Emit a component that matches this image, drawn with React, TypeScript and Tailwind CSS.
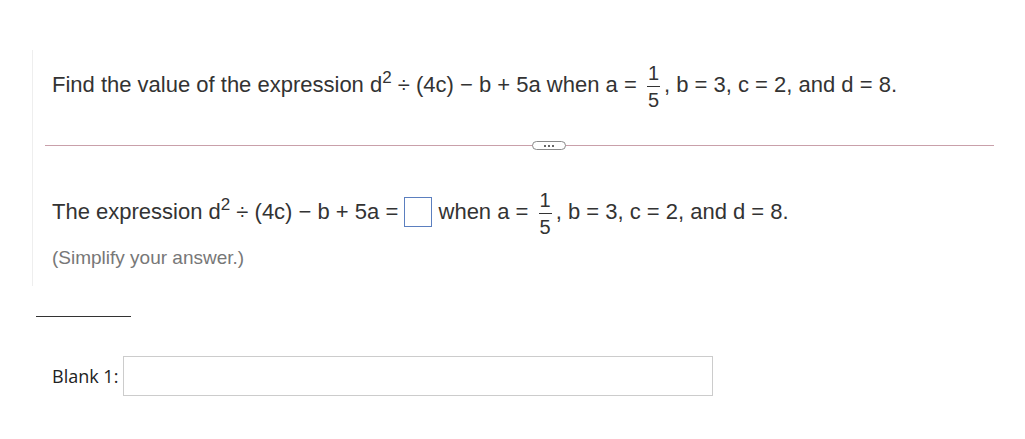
import React from 'react';

const Frac: React.FC<{ num: string; den: string }> = ({ num, den }) => (
    <span className="inline-flex flex-col items-center align-middle mx-[4px] text-[20px] leading-none">
        <span className="px-[1px] pb-[3px] border-b border-[#333]">{num}</span>
        <span className="pt-[3px]">{den}</span>
    </span>
);

const Expr: React.FC = () => (
    <>
        d<span className="text-[17px] align-[9px] leading-none">2</span> ÷ (4c) − b + 5a
    </>
);

const App: React.FC = () => {
    return (
        <div className="w-[1025px] h-[439px] bg-white text-[#333] font-['Liberation_Sans',Arial,sans-serif] overflow-hidden">
            {/* question panel */}
            <div className="ml-[32px] pt-[50px]">
                <div className="border-l border-[#eeeeee] h-[236px]">
                    <p className="pl-[19px] pt-[13px] text-[22px] leading-[40px] whitespace-nowrap">
                        Find the value of the expression <Expr /> when a = <Frac num="1" den="5" />, b = 3, c = 2, and d = 8.
                    </p>

                    {/* divider with expand pill */}
                    <div className="relative ml-[12px] mt-[35px] w-[949px] h-px bg-[#c9a0aa]">
                        <div className="absolute left-[487px] -top-[4px] w-[34px] h-[9px] rounded-full border border-[#8a8a8a] bg-white flex items-center justify-center gap-[2px]">
                            <span className="w-[2px] h-[2px] bg-[#666]" />
                            <span className="w-[2px] h-[2px] bg-[#666]" />
                            <span className="w-[2px] h-[2px] bg-[#666]" />
                        </div>
                    </div>

                    <p className="pl-[19px] mt-[44px] text-[22px] leading-[40px] whitespace-nowrap">
                        The expression <Expr /> ={' '}
                        <span className="inline-block align-middle w-[28px] h-[30px] border border-[#5b7fbf] -mt-[4px]" />{' '}
                        when a = <Frac num="1" den="5" />, b = 3, c = 2, and d = 8.
                    </p>
                    <p className="pl-[19px] mt-[9px] text-[19px] leading-[24px] text-[#777]">(Simplify your answer.)</p>
                </div>
            </div>

            <div className="ml-[36px] mt-[30px] w-[95px] h-px bg-[#333]" />

            <div className="ml-[52px] mt-[39px] flex items-center gap-[5px] font-['Open_Sans',sans-serif] text-[18px] text-[#222]">
                <span>Blank 1:</span>
                <div className="w-[590px] h-[40px] border border-[#cccccc] bg-white" />
            </div>
        </div>
    );
};

export default App;
